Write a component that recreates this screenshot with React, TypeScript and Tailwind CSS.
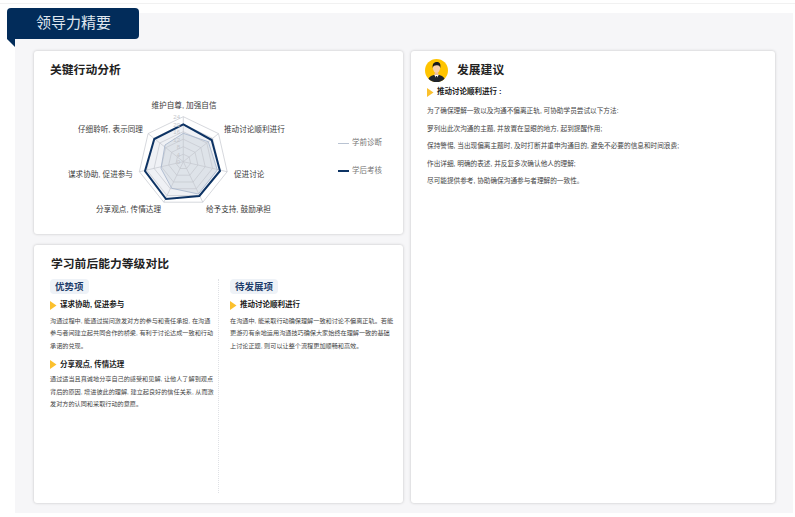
const Arrow = () => (
  <svg width="7" height="9" viewBox="0 0 7 9" className="shrink-0">
    <path d="M0 0 L6.5 4.5 L0 9 Z" fill="#fbc02d" />
  </svg>
);

const ItemHead = ({ children }: { children: React.ReactNode }) => (
  <div className="flex items-center gap-[3px] text-[7.5px] leading-[10px] font-bold text-[#1c1c1c]">
    <Arrow />
    <span>{children}</span>
  </div>
);

const Chip = ({ children }: { children: React.ReactNode }) => (
  <div className="w-fit rounded-[4px] bg-[#eef2f7] px-[5px] py-[1px] text-[9.5px] leading-[13px] font-bold text-[#1e3d6b]">
    {children}
  </div>
);

const center: [number, number] = [133.3, 71.7];
const grid = (r: number) =>
  Array.from({ length: 7 }, (_, i) => {
    const a = (i * 2 * Math.PI) / 7 - Math.PI / 2;
    return `${(center[0] + r * Math.cos(a)).toFixed(1)},${(center[1] + r * Math.sin(a)).toFixed(1)}`;
  }).join(" ");
const spokes = Array.from({ length: 7 }, (_, i) => {
  const a = (i * 2 * Math.PI) / 7 - Math.PI / 2;
  return [center[0] + 45 * Math.cos(a), center[1] + 45 * Math.sin(a)];
});

const toPts = (p: number[][]) => p.map(([x, y]) => `${(x / 3 + 10).toFixed(1)},${(y / 3).toFixed(1)}`).join(" ");
const after = toPts([[370, 103], [455, 150], [480, 243], [418, 318], [318, 327], [255, 243], [283, 147]]);
const before = toPts([[370, 130], [445, 155], [472, 240], [415, 312], [335, 295], [303, 235], [315, 165]]);

const labels: [string, number, number, "start" | "middle" | "end"][] = [
  ["维护自尊, 加强自信", 134, 18, "middle"],
  ["推动讨论顺利进行", 174, 42, "start"],
  ["促进讨论", 184, 87, "start"],
  ["给予支持, 鼓励承担", 156, 122, "start"],
  ["分享观点, 传情达理", 78.5, 122, "middle"],
  ["谋求协助, 促进参与", 18, 87, "start"],
  ["仔细聆听, 表示同理", 28, 42, "start"],
];

const Radar = () => (
  <svg width="250" height="132" viewBox="0 0 250 132" className="shrink-0">
    <polygon points={after} fill="#1e3d6b" fillOpacity="0.07" />
    <polygon points={before} fill="#1e3d6b" fillOpacity="0.08" />
    {[7.5, 15, 22.5, 30, 37.5, 45].map((r) => (
      <polygon key={r} points={grid(r)} fill="none" stroke="#c4c7ce" strokeWidth="0.7" />
    ))}
    {spokes.map(([x, y], i) => (
      <line key={i} x1={center[0]} y1={center[1]} x2={x} y2={y} stroke="#c4c7ce" strokeWidth="0.7" />
    ))}
    <polygon points={before} fill="none" stroke="#a3b2c9" strokeWidth="0.8" />
    <polygon points={after} fill="none" stroke="#0d3364" strokeWidth="2" />
    {[0, 4, 8, 12, 16, 20, 24].map((v, i) => (
      <text key={v} x="130" y={74 - i * 7.5} fontSize="6" fill="#c4c6cb" textAnchor="end">{v}</text>
    ))}
    {labels.map(([t, x, y, anchor]) => (
      <text key={t} x={x} y={y} fontSize="7.6" fill="#3a3a3a" textAnchor={anchor}>{t}</text>
    ))}
  </svg>
);

const Avatar = () => (
  <svg width="23" height="23" viewBox="0 0 46 46" className="shrink-0">
    <defs>
      <clipPath id="av"><circle cx="23" cy="23" r="23" /></clipPath>
    </defs>
    <circle cx="23" cy="23" r="23" fill="#ffc400" />
    <g clipPath="url(#av)">
      <path d="M5 46 C6 36 13 32 23 31 C33 32 40 36 41 46 Z" fill="#20242b" />
      <path d="M18 31 L23 39 L28 31 Z" fill="#fff" />
      <path d="M22 34 L24 34 L25 44 L23 46 L21 44 Z" fill="#20242b" />
      <rect x="19.5" y="25" width="7" height="7" fill="#eebf9d" />
      <ellipse cx="23" cy="18" rx="7.2" ry="9.5" fill="#f7d0ae" />
      <path d="M15.5 18 C14 9 19 6 24 6 C30 6 32 11 30.5 18 C29.5 13 27 12 23 12.5 C19 13 16.5 13 15.5 18 Z" fill="#17191d" />
    </g>
  </svg>
);

export default function App() {
  return (
    <div className="relative h-[517px] w-[795px] overflow-hidden bg-white font-['Liberation_Sans','Noto_Sans_CJK_SC',sans-serif]">
      <div className="mt-[3px] h-px bg-[#f1f1f1]" />
      <div className="absolute left-[7px] top-[8px] z-10 flex h-[31px] w-[132px] items-center rounded-[4px] rounded-bl-none bg-[#022c5a] pl-[29px] text-[15px] text-[#dfe6ee]">
        领导力精要
      </div>
      <svg width="8" height="8" viewBox="0 0 8 8" className="absolute left-[7px] top-[39px] z-10">
        <path d="M0 0 H8 V8 Z" fill="#022c5a" />
      </svg>
      <div className="ml-[15px] mr-[2px] mt-[9px] flex h-[500px] gap-2 bg-[#f6f6f8] pl-[19px] pt-[38px]">
        <div className="flex w-[369px] flex-col gap-[11px]">
          <section className="h-[183px] rounded-[3px] bg-white pl-[16px] pt-[11px] shadow-[0_0_3px_rgba(0,0,0,0.22)]">
            <h2 className="text-[11.8px] leading-[16px] font-bold text-[#222]">关键行动分析</h2>
            <div className="mt-[12px] flex">
              <Radar />
              <div className="ml-[38px] mt-[48px] flex flex-col gap-[18px] text-[7.5px] leading-[10px] text-[#777]">
                <div className="flex items-center gap-[3px]">
                  <span className="h-px w-[11px] bg-[#b9c3d2]" />
                  学前诊断
                </div>
                <div className="flex items-center gap-[3px]">
                  <span className="h-[2px] w-[11px] bg-[#0d3364]" />
                  学后考核
                </div>
              </div>
            </div>
          </section>
          <section className="h-[258px] rounded-[3px] bg-white pl-[16px] pt-[11px] shadow-[0_0_3px_rgba(0,0,0,0.22)]">
            <h2 className="ml-px text-[11.8px] leading-[16px] font-bold text-[#222]">学习前后能力等级对比</h2>
            <div className="mt-[7px] flex">
              <div className="w-[168px]">
                <div className="w-[165px]">
                  <Chip>优势项</Chip>
                  <div className="mt-[6px]">
                    <ItemHead>谋求协助, 促进参与</ItemHead>
                    <p className="mt-[4.75px] text-[6.15px] leading-[12.5px] text-[#444]">
                      沟通过程中, 能通过提问激发对方的参与和责任承担, 在沟通参与者间建立起共同合作的桥梁, 有利于讨论达成一致和行动承诺的兑现。
                    </p>
                  </div>
                  <div className="mt-[7.5px]">
                    <ItemHead>分享观点, 传情达理</ItemHead>
                    <p className="mt-[3.5px] text-[6.15px] leading-[12.5px] text-[#444]">
                      通过适当且真诚地分享自己的感受和见解, 让他人了解到观点背后的原因, 增进彼此的理解, 建立起良好的信任关系, 从而激发对方的认同和采取行动的意愿。
                    </p>
                  </div>
                </div>
              </div>
              <div className="h-[214px] w-[176px] border-l border-dotted border-[#dfe1e5] pl-[11px]">
                <div className="w-[164px]">
                  <Chip>待发展项</Chip>
                  <div className="mt-[6px]">
                    <ItemHead>推动讨论顺利进行</ItemHead>
                    <p className="mt-[4.75px] text-[6.15px] leading-[12.5px] text-[#444]">
                      在沟通中, 能采取行动确保理解一致和讨论不偏离正轨。若能更游刃有余地运用沟通技巧确保大家始终在理解一致的基础上讨论正题, 则可以让整个流程更加顺畅和高效。
                    </p>
                  </div>
                </div>
              </div>
            </div>
          </section>
        </div>
        <section className="h-[452px] w-[364px] rounded-[3px] bg-white pl-[16px] pt-[8px] shadow-[0_0_3px_rgba(0,0,0,0.22)]">
          <div className="-ml-[2px] flex items-center gap-[9px]">
            <Avatar />
            <h2 className="text-[11.8px] font-bold text-[#222]">发展建议</h2>
          </div>
          <div className="mt-[5px] flex items-center gap-[3px] text-[7.5px] leading-[10px] font-bold text-[#1c1c1c]">
            <Arrow />
            <span>推动讨论顺利进行 :</span>
          </div>
          <div className="mt-[9px] flex flex-col gap-[8px] text-[6.65px] leading-[9.5px] text-[#444]">
            <p>为了确保理解一致以及沟通不偏离正轨, 可协助学员尝试以下方法:</p>
            <p>罗列出此次沟通的主题, 并放置在显眼的地方, 起到提醒作用;</p>
            <p>保持警惕, 当出现偏离主题时, 及时打断并重申沟通目的, 避免不必要的信息和时间浪费;</p>
            <p>作出详细, 明确的表述, 并反复多次确认他人的理解;</p>
            <p>尽可能提供参考, 协助确保沟通参与者理解的一致性。</p>
          </div>
        </section>
      </div>
    </div>
  );
}
